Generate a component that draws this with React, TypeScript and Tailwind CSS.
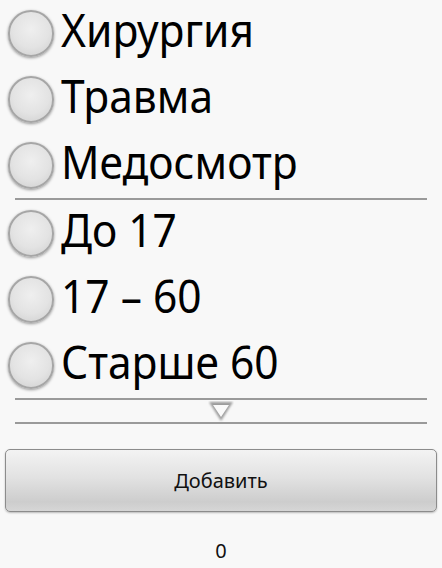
const groups = [
  ["Хирургия", "Травма", "Медосмотр"],
  ["До 17", "17 – 60", "Старше 60"],
]

function Radio() {
  return (
    <div className="w-[46px] h-[47px] rounded-full border-2 border-[#a6a6a6] bg-[radial-gradient(circle_at_50%_40%,#efefef_0%,#e3e3e3_55%,#cdcdcd_100%)] shadow-[0_1px_3px_rgba(0,0,0,0.4)] shrink-0" />
  )
}

function Row({ label }: { label: string }) {
  return (
    <div className="h-[66px] flex items-center pl-[8px]">
      <Radio />
      <span className="ml-[7px] text-[42.5px] leading-none text-black whitespace-nowrap [transform:translateY(-3px)_scaleY(1.09)]">{label}</span>
    </div>
  )
}

export default function App() {
  return (
    <div className="w-[442px] h-[568px] bg-[#f8f8f8] flex flex-col overflow-hidden" style={{ fontFamily: '"Noto Sans", "DejaVu Sans", sans-serif' }}>
      <div className="flex flex-col">
        {groups[0].map((g) => (
          <Row key={g} label={g} />
        ))}
      </div>
      <div className="mx-[15px] h-[2px] bg-[#9a9a9a]" />
      <div className="flex flex-col">
        {groups[1].map((g) => (
          <Row key={g} label={g} />
        ))}
      </div>
      <div className="mx-[15px] h-[2px] bg-[#9a9a9a]" />
      <div className="h-[22px] flex items-start justify-center pt-[1px]">
        <svg width="26" height="21" viewBox="0 0 26 21">
          <defs>
            <filter id="bl" x="-20%" y="-20%" width="140%" height="140%">
              <feGaussianBlur stdDeviation="0.9" />
            </filter>
          </defs>
          <polygon points="1,1 25,1 13,20" fill="#9c9c9c" filter="url(#bl)" />
          <polygon points="5,4 21,4 13,16" fill="#fafafa" />
        </svg>
      </div>
      <div className="mx-[15px] h-[2px] bg-[#9a9a9a]" />
      <div className="px-[5px] pt-[25px]">
        <button className="w-full h-[63px] rounded-[5px] border border-[#8c8c8c] bg-[linear-gradient(to_bottom,#f3f3f3_0%,#e2e2e2_45%,#cdcdcd_85%,#d6d6d6_100%)] shadow-[0_1px_2px_rgba(0,0,0,0.25)] text-[20px] text-[#111] flex items-center justify-center">
          Добавить
        </button>
      </div>
      <div className="pt-[29px] flex justify-center text-[20px] leading-none text-[#111]">0</div>
    </div>
  )
}
